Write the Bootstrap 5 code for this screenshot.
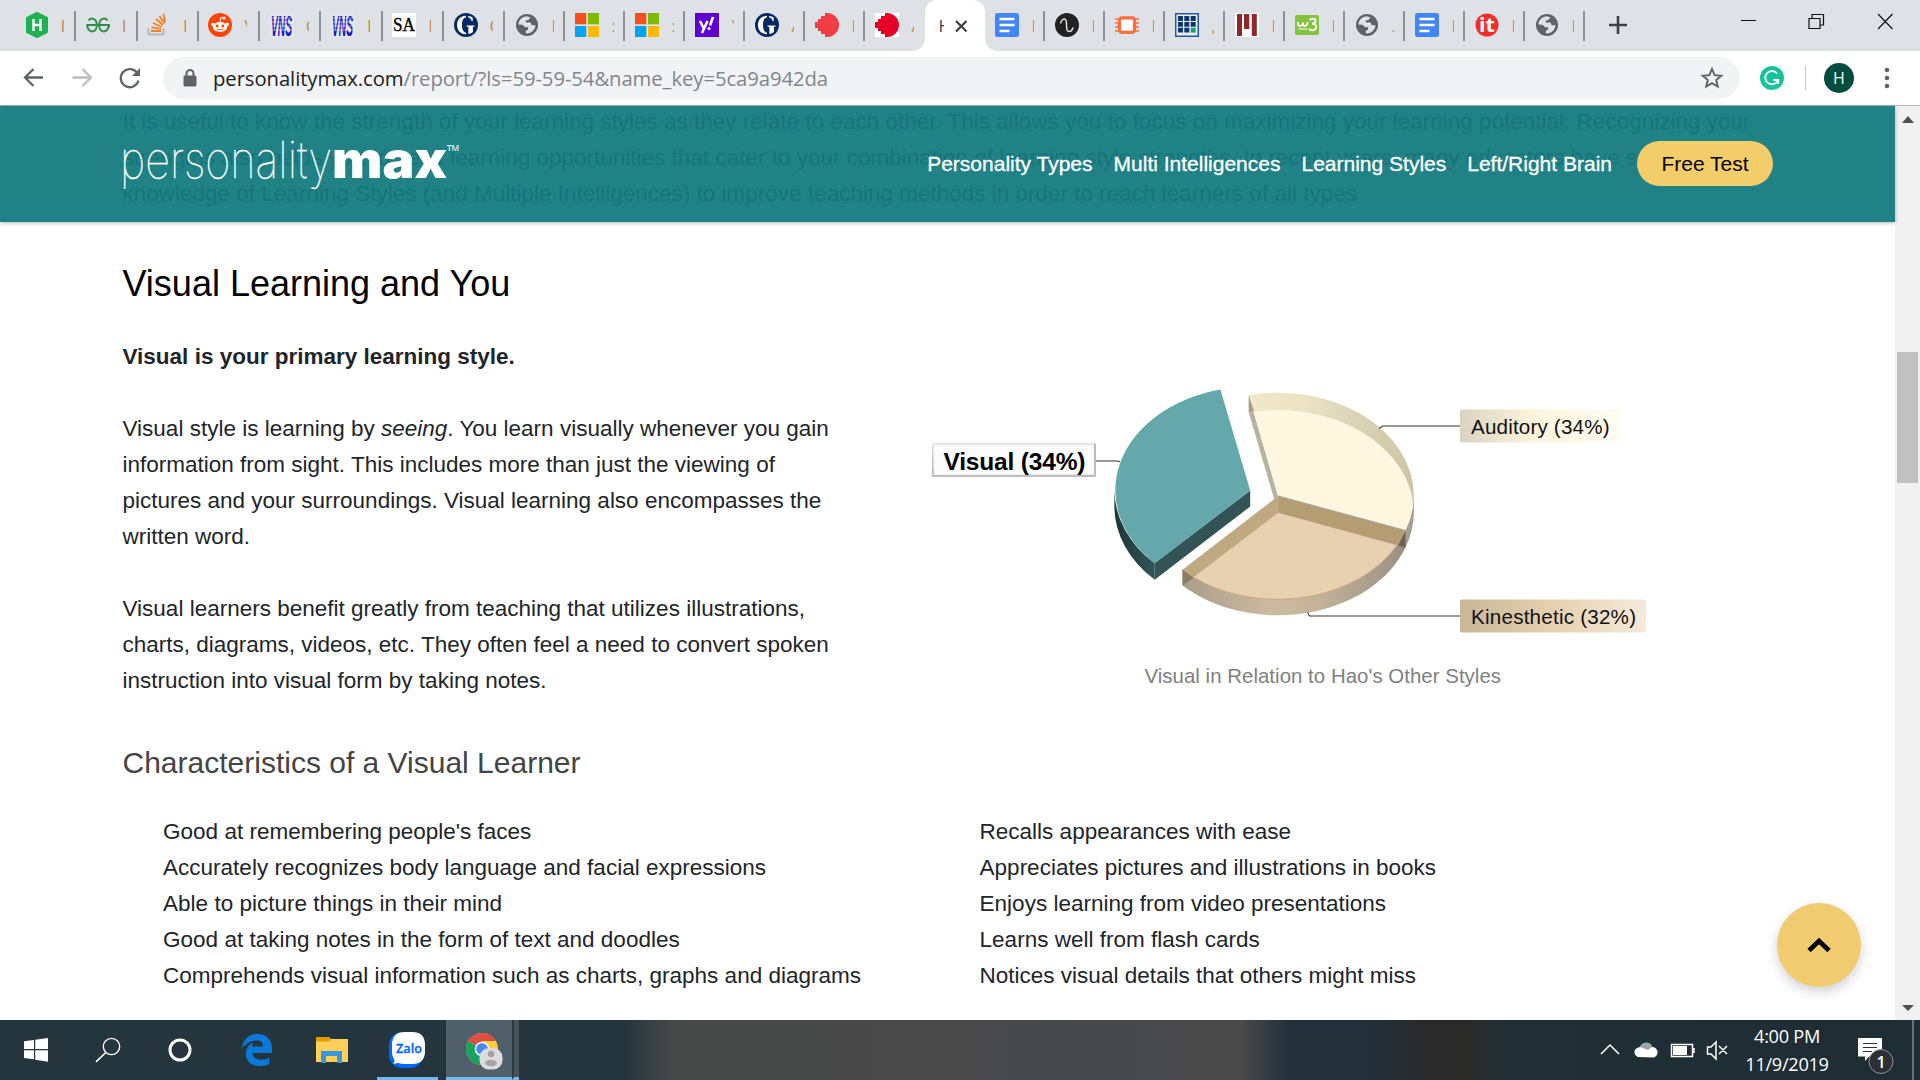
<!DOCTYPE html>
<html lang="en">
<head>
<meta charset="utf-8">
<title>Personality Max – Learning Styles</title>
<link href="https://cdn.jsdelivr.net/npm/bootstrap@5.3.0/dist/css/bootstrap.min.css" rel="stylesheet">
<style>
  body{width:1920px;height:1080px;overflow:hidden;background:#fff;font-family:"Liberation Sans",Arial,sans-serif;color:#212529}
  svg{display:block;flex:none}
  .ui-font{font-family:"Open Sans","Noto Sans",sans-serif}
  .tabstrip{height:51px;background:#dee1e6;padding-left:15px}
  .tab-item{width:60px;height:30px;margin-top:11px;padding-left:10px;border-right:2px solid #8d9196;flex:none}
  .tab-item svg{margin-top:-2px}
  .tab-item.wide{width:61.3px}
  .tab-item.wide svg{margin-left:-.5px}
  .tab-item .tab-text{width:3px;height:22px;line-height:22px;margin-left:12px;overflow:hidden;font-size:17px;color:#b98b55;white-space:nowrap}
  .tab-item.no-line{border-right-color:transparent}
  .tab-open{width:60px;height:51px;background:#fff;border-radius:12px 12px 0 0;padding-left:13px;flex:none}
  .tab-open .tab-text{width:6px;overflow:hidden;font-size:17px;color:#3c4043}
  .foot{width:12px;height:12px;top:39px;z-index:1}
  .foot-l{left:-12px;background:radial-gradient(circle at 0 0,#dee1e6 11.5px,#fff 12px)}
  .foot-r{right:-12px;background:radial-gradient(circle at 100% 0,#dee1e6 11.5px,#fff 12px)}
  .toolbar-row{height:55px;border-bottom:1px solid #b4b6b9;padding-left:21.5px}
  .omnibox{width:1577px;height:42px;border-radius:21px;background:#f1f3f4;padding:0 15.5px 0 20px;margin-left:21px}
  .url-text{font-size:20.3px;letter-spacing:-.08px;color:#80868b;margin-left:16.5px}
  .url-text b{font-weight:400;color:#202124}
  .avatar{width:30px;height:30px;border-radius:50%;background:#004d40;color:#fff;font-size:16px}
  .viewport{height:914px}
  .page-body{width:1895px;padding-left:122.5px}
  .site-header{height:116px;background:#218286;box-shadow:0 1px 4px rgba(0,0,0,.3);overflow:hidden}
  .ghost{left:122.5px;top:-2.5px;width:1650px;font-size:22.5px;line-height:36px;color:#17757a;white-space:nowrap}
  .header-row{padding:0 122px 0 120px;height:115px}
  .site-nav{gap:21px}
  .site-nav .nav-link{color:#fff;font-size:21px;-webkit-text-stroke:.3px #fff;white-space:nowrap}
  .site-nav .btn-test{width:136px;height:45px;border-radius:23px;background:#f3cd69;color:#000;-webkit-text-stroke:0}
  h2{font-size:36px;line-height:44px;color:#000;font-weight:400}
  h3{font-size:30px;line-height:36px;color:#444;font-weight:400}
  .copy{font-size:22.5px;line-height:36px}
  .copy p{margin-bottom:36px}
  .copy-col{width:760.5px}
  .traits li{white-space:nowrap}
  .traits ul{list-style:none;width:816.5px;padding-left:40.6px;margin:0}
  .scroller{width:25px;background:#f1f1f1;padding:10px 0 8px}
  .thumb{width:21px;height:131px;background:#c1c1c1;margin-top:229px}
  .to-top{right:59px;top:797px;width:84px;height:84px;border-radius:50%;background:#f0cb6f;box-shadow:0 5px 12px rgba(0,0,0,.18)}
  .taskbar{height:60px;background:linear-gradient(90deg,#25353d 0,#25353d 625px,#464747 670px,#494949 950px,#47484c 1050px,#494949 1240px,#22303a 1290px,#22303a 1360px,#292a29 1430px,#2a2b29 1470px,#202f36 1510px,#1e2c33 1920px)}
  .task{width:61px;height:60px;flex:none}
  .task-on{border-bottom:3px solid #76b9ed}
  .clock{font-size:18.2px;line-height:28px;color:#fff;letter-spacing:-.3px}
</style>
<script src="https://cdn.jsdelivr.net/npm/bootstrap@5.3.0/dist/js/bootstrap.bundle.min.js"></script>
</head>
<body class="d-flex flex-column">
<svg width="0" height="0" class="position-absolute">
  <symbol id="globe" viewBox="0 0 24 24"><circle cx="12" cy="12" r="11" fill="#5f6368"/><path d="M11 3.2c-4 .7-7.5 4-7.600 8.300l4 .2 2.800 2.500h2.800v2.500l-2.200 1v2.600c5 .7 9.400-3.400 9.700-8h-3.700l-1.200-2.700-4.800-.2v-2l2.600-.3 2-2.800z" fill="#dee1e6"/></symbol>
  <symbol id="ms" viewBox="0 0 24 24"><path fill="#f25022" d="M0 0h11.300v11.300H0z"/><path fill="#7fba00" d="M13 0h11v11.300H13z"/><path fill="#00a4ef" d="M0 13h11.300v11H0z"/><path fill="#ffb900" d="M13 13h11v11H13z"/></symbol>
  <symbol id="doc" viewBox="0 0 24 24"><rect width="24" height="24" rx="2.500" fill="#4285f4"/><path d="M4.500 6h15M4.500 12h15M4.500 18h10" stroke="#fff" stroke-width="2.400"/></symbol>
  <symbol id="guard" viewBox="0 0 24 24"><circle cx="12" cy="12" r="12" fill="#052962"/><path d="M12 2.800C6 3 3 7 3 12s3 9 9 9.200v-1.400C9 19 8 16 8 12s1-7 4-7.800zM14 2.900v1.400c2 .5 3.200 2 3.800 3.900h.9V4.400C17.500 3.500 16 3 14 2.900zM12.500 12.500h8v1l-1.600.6v5c-1.200 1-2.900 1.700-4.500 1.900v-7l-1.900-.5z" fill="#fff"/></symbol>
  <symbol id="vns" viewBox="0 0 24 24"><rect width="24" height="24" fill="#e6e6ea"/><text x="1" y="22.500" font-family="Liberation Sans" font-style="italic" font-weight="bold" font-size="30" textLength="21" lengthAdjust="spacingAndGlyphs" fill="#1414c8">VNS</text><path d="M0 5h24M0 9h24M0 13h24M0 17h24" stroke="#e6e6ea" stroke-width=".7"/></symbol>
</svg>

<header class="tabstrip d-flex ui-font">
  <div class="tab-item wide d-flex align-items-center"><svg width="24" height="26" viewBox="0 0 24 26"><path d="M12 1l10 5v14l-10 5L2 20V6z" fill="#1fb254" stroke="#1fb254" stroke-width="2" stroke-linejoin="round"/><path d="M8.500 7v12M15.500 7v12M8.500 13h7" stroke="#fff" stroke-width="2.400"/></svg><span class="tab-text">I</span></div>
  <div class="tab-item wide d-flex align-items-center"><svg width="24" height="24" viewBox="0 0 24 24"><path d="M2.500 7.500C4.500 4 10.800 5 10.800 12S5.500 19.500 3 17Q1 15 1.200 12H23v2M21.500 7.500C19.500 4 13.200 5 13.200 12s5.300 7.500 7.800 5Q23 15 22.800 12" fill="none" stroke="#2f8d46" stroke-width="1.900"/></svg><span class="tab-text">I</span></div>
  <div class="tab-item wide d-flex align-items-center"><svg width="24" height="24" viewBox="0 0 24 24"><path d="M1.500 15v6.500h15V15" fill="none" stroke="#bcbbbb" stroke-width="2"/><path d="M4 18h10M4.500 14.300l9.500 1.500M6 10l8.800 4M9 6l7 6M12.500 3l5 7.500M16.500 1l1.500 8" stroke="#f48024" stroke-width="1.800"/></svg><span class="tab-text">I</span></div>
  <div class="tab-item wide d-flex align-items-center"><svg width="24" height="24" viewBox="0 0 24 24"><circle cx="12" cy="12" r="12" fill="#ff4500"/><ellipse cx="12" cy="14" rx="7.200" ry="5" fill="#fff"/><circle cx="4.800" cy="11.500" r="1.800" fill="#fff"/><circle cx="19.200" cy="11.500" r="1.800" fill="#fff"/><circle cx="16" cy="5" r="1.500" fill="#fff"/><path d="M12 9l1-4.500 3 .6" stroke="#fff" fill="none"/><circle cx="9.200" cy="13" r="1.400" fill="#ff4500"/><circle cx="14.800" cy="13" r="1.400" fill="#ff4500"/><path d="M9 16q3 1.800 6 0" stroke="#ff4500" fill="none"/></svg><span class="tab-text">V</span></div>
  <div class="tab-item wide d-flex align-items-center"><svg width="24" height="24"><use href="#vns"/></svg><span class="tab-text">C</span></div>
  <div class="tab-item wide d-flex align-items-center"><svg width="24" height="24"><use href="#vns"/></svg><span class="tab-text">I</span></div>
  <div class="tab-item wide d-flex align-items-center"><svg width="24" height="24" viewBox="0 0 24 24"><rect width="24" height="24" fill="#fff"/><text x="1" y="18" font-family="Liberation Serif" font-size="19" textLength="22" lengthAdjust="spacingAndGlyphs" stroke="#000" stroke-width=".4">SA</text></svg><span class="tab-text">I</span></div>
  <div class="tab-item wide d-flex align-items-center"><svg width="24" height="24"><use href="#guard"/></svg><span class="tab-text">C</span></div>
  <div class="tab-item d-flex align-items-center"><svg width="24" height="24"><use href="#globe"/></svg><span class="tab-text">I</span></div>
  <div class="tab-item d-flex align-items-center"><svg width="24" height="24"><use href="#ms"/></svg><span class="tab-text">:</span></div>
  <div class="tab-item d-flex align-items-center"><svg width="24" height="24"><use href="#ms"/></svg><span class="tab-text">:</span></div>
  <div class="tab-item d-flex align-items-center"><svg width="24" height="24" viewBox="0 0 24 24"><rect width="24" height="24" fill="#6001d2"/><path d="M5 8l4 8M12.500 8L7 20" stroke="#fff" stroke-width="2.600"/><path d="M18 4l-3 8.500" stroke="#fff" stroke-width="2.600"/><circle cx="14" cy="15.500" r="1.500" fill="#fff"/></svg><span class="tab-text">Y</span></div>
  <div class="tab-item d-flex align-items-center"><svg width="24" height="24"><use href="#guard"/></svg><span class="tab-text">A</span></div>
  <div class="tab-item d-flex align-items-center"><svg width="24" height="24" viewBox="0 0 24 24"><path d="M12 0a12 12 0 0 1 0 24h-2v-3H6v-3H3v-3H0V9h3V6h3V3h4V0z" fill="#f03e44"/></svg><span class="tab-text">I</span></div>
  <div class="tab-item no-line d-flex align-items-center"><svg width="24" height="24" viewBox="0 0 24 24"><rect width="24" height="24" fill="#fff"/><path d="M12 0a12 12 0 0 1 0 24h-2v-3H6v-3H3v-3H0V9h3V6h3V3h4V0z" fill="#e60028"/></svg><span class="tab-text">A</span></div>
  <div class="tab-open d-flex align-items-center position-relative"><i class="foot foot-l position-absolute"></i><i class="foot foot-r position-absolute"></i><span class="tab-text">H</span><svg class="ms-2" width="18" height="18" viewBox="0 0 18 18"><path d="M4 4l10.500 10.500M14.500 4L4 14.500" stroke="#3c4043" stroke-width="2.200"/></svg></div>
  <div class="tab-item d-flex align-items-center"><svg width="24" height="24"><use href="#doc"/></svg><span class="tab-text">I</span></div>
  <div class="tab-item d-flex align-items-center"><svg width="24" height="24" viewBox="0 0 24 24"><circle cx="12" cy="12" r="12" fill="#222"/><path d="M5.500 10.500C7 5 11.500 4 11.500 10.500S12 18.500 14.500 18.500 17.500 16 18 14.500" fill="none" stroke="#e4e4e4" stroke-width="1.400"/></svg><span class="tab-text">I</span></div>
  <div class="tab-item d-flex align-items-center"><svg width="24" height="24" viewBox="0 0 24 24"><path d="M0 6h24M0 10h24M0 14h24M0 18h24" stroke="#f9703e" stroke-width="1.700"/><rect x="4.500" y="4.800" width="15" height="14.500" rx="2.500" fill="#fff" stroke="#f9703e" stroke-width="3.200"/></svg><span class="tab-text">I</span></div>
  <div class="tab-item d-flex align-items-center"><svg width="24" height="24" viewBox="0 0 24 24"><rect x=".75" y=".75" width="22.500" height="22.500" fill="#f0f0ea" stroke="#1f56b5" stroke-width="1.500"/><path d="M3 3h5v5H3zM9.300 3h5v5h-5zM15.700 3h5v5h-5zM3 9h5v4.700H3zM9.300 9h5v4.700h-5zM15.700 9h5v4.700h-5zM3 14.800h5v4.800H3zM9.300 14.800h5v4.800h-5z" fill="#0b3472"/><path d="M15.700 14.800h5v4.800h-5z" fill="#159a86"/></svg><span class="tab-text">,</span></div>
  <div class="tab-item d-flex align-items-center"><svg width="24" height="24" viewBox="0 0 24 24"><rect width="24" height="24" fill="#fff"/><path d="M2 1h5v22H2zM9 1h5.300v15H9zM16.800 1h5v22h-5z" fill="#8e282b"/></svg><span class="tab-text">I</span></div>
  <div class="tab-item d-flex align-items-center"><svg width="24" height="24" viewBox="0 0 24 24"><rect y="2" width="24" height="20" rx="2" fill="#83c33d"/><path d="M3 9q-.6 4 2 4t3-3.500q-.3 3.500 2 3.500 2.500-.3 2.500-4M14.500 7c2-2 6-1.500 6 .8s-2 3-3.500 3c2 0 4.500.8 4.300 3.400-.3 3-4.500 4.300-7.300 1.600" fill="none" stroke="#fff" stroke-width="1.900"/><path d="M3.500 16h9" stroke="#fff" stroke-width="1"/></svg><span class="tab-text">I</span></div>
  <div class="tab-item d-flex align-items-center"><svg width="24" height="24"><use href="#globe"/></svg><span class="tab-text">.</span></div>
  <div class="tab-item d-flex align-items-center"><svg width="24" height="24"><use href="#doc"/></svg><span class="tab-text">I</span></div>
  <div class="tab-item d-flex align-items-center"><svg width="24" height="24" viewBox="0 0 24 24"><circle cx="12" cy="12" r="11.500" fill="#f52c2c"/><text x="4" y="19" font-family="Open Sans" font-weight="bold" font-size="20" textLength="16" lengthAdjust="spacingAndGlyphs" fill="#fff">it</text></svg><span class="tab-text">I</span></div>
  <div class="tab-item d-flex align-items-center"><svg width="24" height="24"><use href="#globe"/></svg><span class="tab-text">I</span></div>
  <svg class="ms-4" width="18" height="50" viewBox="0 0 18 50"><path d="M0 25h18M9 16v18" stroke="#3c4043" stroke-width="2.600"/></svg>
  <div class="d-flex ms-auto" style="padding-right:26px">
    <svg width="154" height="42" viewBox="0 0 154 42"><path d="M1 20.500h15M69 18.500h11v10h-11zM72 18v-3.500h11.500v10.500h-3M138 14l14.500 15M152.500 14l-14.500 15" fill="none" stroke="#111" stroke-width="1.200"/></svg>
  </div>
</header>

<div class="toolbar-row d-flex align-items-center ui-font">
  <svg width="120" height="26" viewBox="0 0 120 26"><g fill="none" stroke-width="2.300"><path d="M21 12.500H3.500M11.500 4L3 12.500l8.500 8.500" stroke="#5f6368"/><path d="M50.500 12.500H68M60.500 4l8.500 8.500-8.500 8.500" stroke="#bbbdbf"/><path d="M115.500 8.500a9 9 0 1 0 1 7" stroke="#5f6368"/></g><path d="M118 3v8h-8z" fill="#5f6368"/></svg>
  <div class="omnibox d-flex align-items-center">
    <svg width="14" height="18" viewBox="0 0 14 18"><rect x=".5" y="6.500" width="13" height="11" rx="1.500" fill="#5f6368"/><path d="M3.500 7V4.500a3.500 3.500 0 0 1 7 0V7" fill="none" stroke="#5f6368" stroke-width="2"/></svg>
    <span class="url-text"><b>personalitymax.com</b>/report/?ls=59-59-54&amp;name_key=5ca9a942da</span>
    <svg class="ms-auto" width="24" height="24" viewBox="0 0 24 24"><path d="M12 3l2.600 6.200 6.700.5-5.100 4.400 1.600 6.500L12 17.100l-5.800 3.500 1.600-6.500-5.100-4.400 6.700-.5z" fill="none" stroke="#5f6368" stroke-width="1.900"/></svg>
  </div>
  <svg width="24" height="24" viewBox="0 0 24 24" style="margin-left:20.5px"><circle cx="12" cy="12" r="12" fill="#15c39a"/><path d="M17 7.500A6.600 6.600 0 1 0 18 14h-4.500M18.200 13v5" fill="none" stroke="#fff" stroke-width="1.900"/></svg>
  <div class="vr align-self-center" style="height:24px;margin:0 18px 0 21px"></div>
  <div class="avatar d-flex align-items-center justify-content-center">H</div>
  <svg width="6" height="22" viewBox="0 0 6 22" style="margin-left:30px"><g fill="#5f6368"><circle cx="3" cy="3" r="2.300"/><circle cx="3" cy="11" r="2.300"/><circle cx="3" cy="19" r="2.300"/></g></svg>
</div>

<div class="viewport d-flex position-relative">
  <main class="d-flex flex-column" style="width:1895px">
    <div class="site-header position-relative flex-shrink-0">
      <div class="ghost position-absolute">It is useful to know the strength of your learning styles as they relate to each other. This allows you to focus on maximizing your learning potential. Recognizing your<br>strengths also helps you to seek learning opportunities that cater to your combination of learning style strengths. In recent years, many educators have started using<br>knowledge of Learning Styles (and Multiple Intelligences) to improve teaching methods in order to reach learners of all types</div>
      <div class="header-row d-flex align-items-center justify-content-between position-relative">
        <svg width="342" height="54" viewBox="-3 0 342 54"><g fill="#fff"><text x="-3" y="41" font-family="Inter" font-weight="100" font-size="51" textLength="212" lengthAdjust="spacingAndGlyphs" stroke="#fff" stroke-width=".4">personality</text><text x="209" y="41" font-family="Inter" font-weight="900" font-size="51" textLength="115" lengthAdjust="spacingAndGlyphs">max</text><text x="323.500" y="13.500" font-family="Liberation Sans" font-size="9" textLength="12.500">TM</text></g></svg>
        <nav class="site-nav d-flex align-items-center">
          <a class="nav-link p-0" href="#">Personality Types</a><a class="nav-link p-0" href="#">Multi Intelligences</a><a class="nav-link p-0" href="#">Learning Styles</a><a class="nav-link p-0" href="#">Left/Right Brain</a>
          <a class="nav-link btn-test p-0 d-flex align-items-center justify-content-center ms-1" href="#">Free Test</a>
        </nav>
      </div>
    </div>
    <section class="page-body">
      <h2 class="mb-0" style="margin-top:40px">Visual Learning and You</h2>
      <div class="copy d-flex" style="margin-top:32.5px">
        <div class="copy-col">
          <p><strong>Visual is your primary learning style.</strong></p>
          <p>Visual style is learning by <em>seeing</em>. You learn visually whenever you gain<br>information from sight. This includes more than just the viewing of<br>pictures and your surroundings. Visual learning also encompasses the<br>written word.</p>
          <p>Visual learners benefit greatly from teaching that utilizes illustrations,<br>charts, diagrams, videos, etc. They often feel a need to convert spoken<br>instruction into visual form by taking notes.</p>
        </div>
        <svg class="ms-3" width="770" height="350" viewBox="899 338.500 770 350" font-family="Liberation Sans">
          <defs>
            <linearGradient id="gv"><stop offset="0" stop-color="#1f3434"/><stop offset="1" stop-color="#325658"/></linearGradient>
            <linearGradient id="ga"><stop offset="0" stop-color="#f1e8ca"/><stop offset=".35" stop-color="#ece3c4"/><stop offset=".6" stop-color="#dcd5b8"/><stop offset="1" stop-color="#cec5a4"/></linearGradient>
            <linearGradient id="gk"><stop offset="0" stop-color="#a99d89"/><stop offset=".4" stop-color="#cdbba1"/><stop offset=".6" stop-color="#c5b399"/><stop offset="1" stop-color="#9a9184"/></linearGradient>
            <linearGradient id="la"><stop offset="0" stop-color="#d9d4c2"/><stop offset=".5" stop-color="#fff6de"/><stop offset="1" stop-color="#fffcf2"/></linearGradient>
            <linearGradient id="lk"><stop offset="0" stop-color="#c7b697"/><stop offset=".5" stop-color="#e6d1b0"/><stop offset="1" stop-color="#f4eadc"/></linearGradient>
          </defs>
          <!-- visual slice -->
          <path d="M1114.400 490A135.800 103.200 0 0 0 1154.700 562.700V579.300A135.800 103.200 0 0 1 1114.400 506z" fill="url(#gv)"/>
          <path d="M1250.200 490V506L1154.700 579.300V562.700z" fill="#325457"/>
          <path d="M1250.200 490L1220.400 389A135.800 103.500 0 0 0 1154.700 562.700z" fill="#64a8ab"/>
          <!-- auditory slice -->
          <path d="M1248.800 394.700L1278.100 495.700V512L1248.800 412z" fill="#b7b39f"/>
          <path d="M1278.100 495.700L1248.800 394.700A135.800 103.400 0 0 1 1405.500 530.300z" fill="#fff7df"/>
          <path d="M1248.800 394.700A135.800 103.400 0 0 1 1413.900 495.700V512A135.800 103.400 0 0 0 1248.800 412z" fill="url(#ga)"/>
          <path d="M1248.800 394.700V412L1253.900 410.800z" fill="#a39d83"/>
          <path d="M1413.900 495.700A135.800 103.400 0 0 1 1405.500 530.300V547A135.800 103.400 0 0 0 1413.900 512z" fill="#a39f94"/>
          <!-- kinesthetic slice -->
          <path d="M1278.100 495.700L1405.500 530.300A135.800 103.400 0 0 1 1182.600 569.300z" fill="#e7d1b1"/>
          <path d="M1278.100 495.700L1405.500 530.300V547L1278.100 512.300z" fill="#b49c73"/>
          <path d="M1278.100 495.700L1182.600 569.300V585L1278.100 512.300z" fill="#c0a880"/>
          <path d="M1182.600 569.300A135.800 103.400 0 0 0 1405.500 530.300V547A135.800 103.400 0 0 1 1182.600 585z" fill="url(#gk)"/>
          <path d="M1182.600 569.300A135.800 103.400 0 0 0 1405.500 530.300" fill="none" stroke="#c6a874"/>
          <path d="M1182.600 569.300V585L1193.500 577.300z" fill="#8a7c65"/>
          <path d="M1405.500 530.300V547L1398 545z" fill="#6e634e"/>
          <path d="M1278.100 495.700L1405.500 530.300" stroke="#aaa38e" stroke-width="1.500"/>
          <!-- leaders and labels -->
          <path d="M1096 460.500h21l3 .7M1379 427.700l4-2.200h78M1307.500 612l2 3.500h152" fill="none" stroke="#333" stroke-width="1.100"/>
          <path d="M932 443h164v33.500H932z" fill="#bfbfbf"/><path d="M932 443h162v31l-160 .5z" fill="#ececec"/><path d="M934.500 445h159v29h-159z" fill="#fcfcfd"/>
          <text x="943.500" y="469" font-weight="bold" font-size="24.500" textLength="142" fill="#000">Visual (34%)</text>
          <rect x="1460" y="409" width="160" height="33" rx="2" fill="url(#la)"/><text x="1471" y="433" font-size="20.600" textLength="138.500" fill="#111">Auditory (34%)</text>
          <rect x="1460" y="599" width="186" height="33" rx="2" fill="url(#lk)"/><text x="1471" y="623" font-size="20.600" textLength="165" fill="#111">Kinesthetic (32%)</text>
          <text x="1144.500" y="682" font-size="20.400" textLength="356.500" fill="#808080">Visual in Relation to Hao's Other Styles</text>
        </svg>
      </div>
      <h3 class="mb-0" style="margin-top:10.5px">Characteristics of a Visual Learner</h3>
      <div class="traits copy d-flex" style="margin-top:33px">
        <ul><li>Good at remembering people's faces</li><li>Accurately recognizes body language and facial expressions</li><li>Able to picture things in their mind</li><li>Good at taking notes in the form of text and doodles</li><li>Comprehends visual information such as charts, graphs and diagrams</li></ul>
        <ul><li>Recalls appearances with ease</li><li>Appreciates pictures and illustrations in books</li><li>Enjoys learning from video presentations</li><li>Learns well from flash cards</li><li>Notices visual details that others might miss</li></ul>
      </div>
    </section>
  </main>
  <aside class="scroller d-flex flex-column align-items-center">
    <svg width="12" height="7"><path d="M0 7l6-7 6 7z" fill="#505050"/></svg>
    <div class="thumb"></div>
    <svg class="mt-auto" width="12" height="7"><path d="M0 0l6 6 6-6z" fill="#505050"/></svg>
  </aside>
  <div class="to-top position-absolute d-flex align-items-center justify-content-center"><svg width="24" height="16" viewBox="0 0 24 16"><path d="M2 13.500L12 4l10 9.500" fill="none" stroke="#000" stroke-width="4.600"/></svg></div>
</div>

<footer class="taskbar d-flex ui-font flex-shrink-0">
  <div class="d-flex align-items-center">
    <svg width="372" height="60" viewBox="0 0 372 60">
      <path d="M24 21.200l10-1.200V29H24zM35.200 19.800L48 18V29H35.200zM24 30.200h10v9L24 38zM35.200 30.200H48v11.500l-12.800-1.900z" fill="#fff"/>
      <circle cx="111.500" cy="26.500" r="8.200" fill="none" stroke="#fff" stroke-width="1.300"/><path d="M105.800 32.500L96 41.800" stroke="#fff" stroke-width="1.600"/>
      <circle cx="180" cy="30" r="10" fill="none" stroke="#fff" stroke-width="3"/>
      <path d="M242 28.500C243 19 249 14 257.500 14 266.500 14 272 20 272 29v4h-19.500c.3 4.500 3.500 6.700 8.500 6.700 3.300 0 6-.8 8.200-2v6.500c-3 1.300-6 1.800-9.700 1.800-8.500 0-13.500-5-13.500-12 0-6 3-9.500 7-11.800-.6 1.200-.8 2-.8 4.300H263c0-4-2-6-6-6-6 0-11.500 3.200-15 8z" fill="#0a7ad8"/>
      <path d="M316 17h13l2 2h17v23h-32z" fill="#fdd05a"/><path d="M316 17h13l1.500 2.500L329 21.500h-13z" fill="#dd9b09"/><path d="M321 43V31h21v12h-5v-7h-11v7z" fill="#3b96dd"/>
    </svg>
  </div>
  <div class="task task-on" style="margin-left:5px"><svg width="61" height="57" viewBox="0 0 61 57"><rect x="12" y="12" width="34" height="36" rx="13" fill="#0068ff"/><path d="M28 12h7q13 0 13 13v6q0 13-13 13h-7q-4 0-7-1l-5 1q2-2 1.500-4-2.500-3-2.500-9v-6q0-13 13-13z" fill="#fff"/><text x="19" y="33" font-family="Open Sans" font-weight="600" font-size="13" textLength="26" lengthAdjust="spacingAndGlyphs" fill="#0068ff" stroke="#0068ff" stroke-width=".3">Zalo</text></svg></div>
  <div class="task task-on" style="margin-left:8px;width:66px;background:#50606a"><svg width="66" height="57" viewBox="446 0 66 57">
    <circle cx="482" cy="29" r="16" fill="#ffcd40"/><path d="M482 29L468.100 21A16 16 0 0 1 495.900 21H482z" fill="#dd4f43"/><path d="M468.100 21A16 16 0 0 0 482 45l6-12z" fill="#1aa15f"/><circle cx="482" cy="29" r="7.300" fill="#f1f1f1"/><circle cx="482" cy="29" r="5.800" fill="#4688f1"/>
    <rect x="479.500" y="28" width="23" height="21.500" rx="9.500" fill="#dcdcdc"/><circle cx="491" cy="34" r="3.300" fill="#a5a5a5"/><ellipse cx="491" cy="43" rx="6" ry="3.200" fill="#a5a5a5"/></svg></div>
  <div class="task task-on" style="width:7px;background:#475259;border-left:2px solid #2d383e"></div>
  <div class="d-flex align-items-center ms-auto">
    <svg width="130" height="60" viewBox="1600 0 130 60"><g fill="none" stroke="#fff" stroke-width="1.500"><path d="M1601 34l9-9 9 9"/><path d="M1671.500 24.500h21v12h-21zM1694 28v5M1707.500 27h3.500l5-5v17l-5-5h-3.500zM1719 26l8 8M1727 26l-8 8"/></g><path d="M1673 26h14v9h-14z" fill="#fff"/><path d="M1638 37c-5-2-5-9 2-10 3-6 11-5 12 0 6 0 8 8 2 10.500z" fill="#fff"/><path d="M1640 27c3-6 11-5 12 0l-4 3z" fill="#9ba3a7"/></svg>
    <div class="clock text-center" style="width:100px;margin-left:7px;margin-right:7px"><div>4:00 PM</div><div>11/9/2019</div></div>
    <svg width="76" height="60" viewBox="1844 0 76 60"><path d="M1858 18h24v18.500h-13l-4 4.500v-4.500h-7z" fill="#fff"/><path d="M1863 23.500h14M1863 27.500h14M1863 31.500h9" stroke="#25353d" stroke-width="1.200"/><circle cx="1881" cy="41.500" r="12" fill="#2c3033" stroke="#8d9397"/><text x="1876.500" y="47.500" font-family="Open Sans" font-weight="600" font-size="16" fill="#fff">1</text><path d="M1913 0v60" stroke="#7e888d" stroke-width="1.500"/></svg>
  </div>
</footer>
</body>
</html>
